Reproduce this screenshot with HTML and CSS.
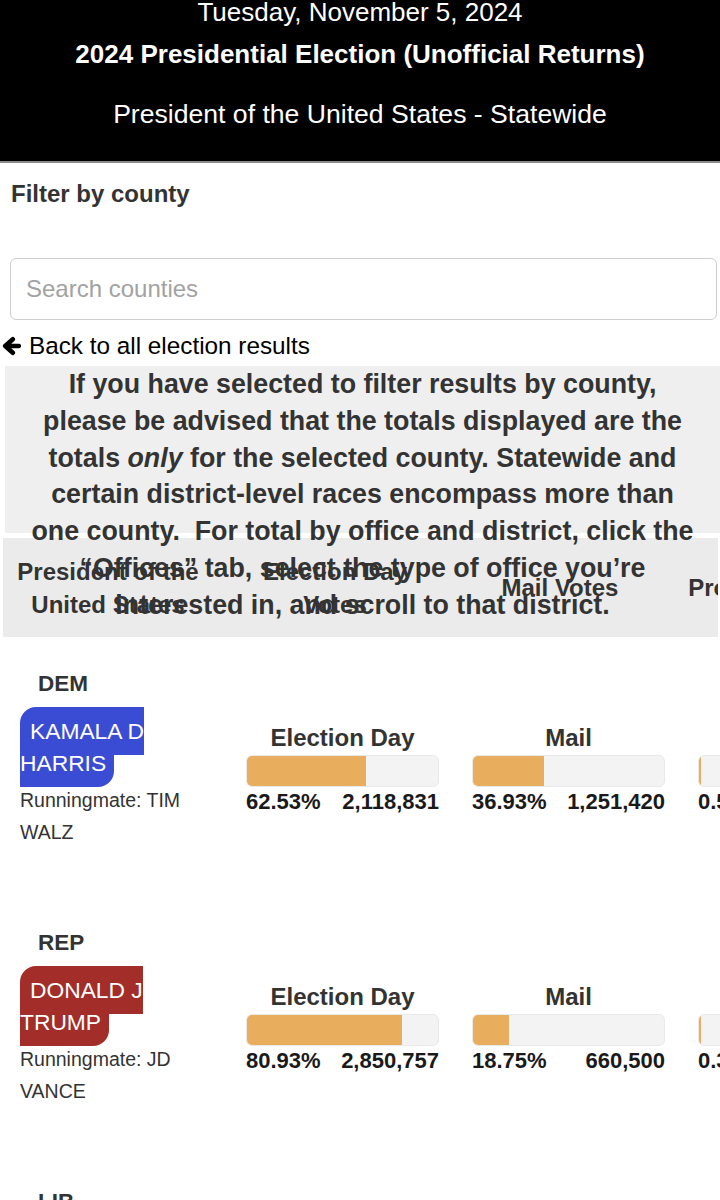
FILE: index.html
```html
<!DOCTYPE html>
<html lang="en">
<head>
<meta charset="utf-8">
<title>2024 Presidential Election (Unofficial Returns)</title>
<link rel="stylesheet" href="styles.css">
</head>
<body>
<header class="masthead">
  <p class="date">Tuesday, November 5, 2024</p>
  <h1 class="election">2024 Presidential Election (Unofficial Returns)</h1>
  <h2 class="race">President of the United States - Statewide</h2>
</header>
<main class="page">
  <h3 class="filter-title">Filter by county</h3>
  <input class="search" type="text" placeholder="Search counties">
  <a class="back" href="#"><svg class="back-icon" viewBox="0 0 19 20" width="19" height="20" aria-hidden="true"><path d="M16.8 10H4.5M10.8 3.2L3.2 10L10.8 16.8" fill="none" stroke="#000" stroke-width="4.6" stroke-linecap="round" stroke-linejoin="round"/></svg>Back to all election results</a>

  <div class="notice">If you have selected to filter results by county, please be advised that the totals displayed are the totals <em>only</em> for the selected county. Statewide and certain district-level races encompass more than one county.&nbsp; For total by office and district, click the “Offices” tab, select the type of office you’re interested in, and scroll to that district.</div>

  <div class="table-head">
    <div class="th th-office">President of the United States</div>
    <div class="th th-eday">Election Day Votes</div>
    <div class="th th-mail">Mail Votes</div>
    <div class="th th-prov">Provisional Votes</div>
  </div>

  <div class="results">
    <div class="cand-row">
      <div class="cand">
        <div class="party">DEM</div>
        <div class="name-wrap"><span class="name dem">KAMALA D HARRIS</span></div>
        <div class="mate">Runningmate: TIM WALZ</div>
      </div>
      <div class="vote">
        <div class="vote-label">Election Day</div>
        <div class="bar"><div class="fill" style="width:62.53%"></div></div>
        <div class="nums"><span>62.53%</span><span>2,118,831</span></div>
      </div>
      <div class="vote">
        <div class="vote-label">Mail</div>
        <div class="bar"><div class="fill" style="width:36.93%"></div></div>
        <div class="nums"><span>36.93%</span><span>1,251,420</span></div>
      </div>
      <div class="vote">
        <div class="vote-label">Provisional</div>
        <div class="bar"><div class="fill" style="width:1.2%"></div></div>
        <div class="nums"><span>0.54%</span><span>18,312</span></div>
      </div>
    </div>

    <div class="cand-row">
      <div class="cand">
        <div class="party">REP</div>
        <div class="name-wrap"><span class="name rep">DONALD J TRUMP</span></div>
        <div class="mate">Runningmate: JD VANCE</div>
      </div>
      <div class="vote">
        <div class="vote-label">Election Day</div>
        <div class="bar"><div class="fill" style="width:80.93%"></div></div>
        <div class="nums"><span>80.93%</span><span>2,850,757</span></div>
      </div>
      <div class="vote">
        <div class="vote-label">Mail</div>
        <div class="bar"><div class="fill" style="width:18.75%"></div></div>
        <div class="nums"><span>18.75%</span><span>660,500</span></div>
      </div>
      <div class="vote">
        <div class="vote-label">Provisional</div>
        <div class="bar"><div class="fill" style="width:1.2%"></div></div>
        <div class="nums"><span>0.32%</span><span>11,204</span></div>
      </div>
    </div>

    <div class="cand-row">
      <div class="cand">
        <div class="party">LIB</div>
        <div class="name-wrap"><span class="name lib">CHASE OLIVER</span></div>
        <div class="mate">Runningmate: MIKE TER MAAT</div>
      </div>
      <div class="vote">
        <div class="vote-label">Election Day</div>
        <div class="bar"><div class="fill" style="width:70.10%"></div></div>
        <div class="nums"><span>70.10%</span><span>23,004</span></div>
      </div>
    </div>
  </div>
</main>
</body>
</html>
```

FILE: styles.css
```css
html, body {
  margin: 0;
  padding: 0;
  overflow: hidden;
  background: #fff;
}

body {
  font-family: "Liberation Sans", Arial, sans-serif;
  color: #333;
}

/* ---------- masthead ---------- */
.masthead {
  background: #000;
  color: #fff;
  text-align: center;
  padding-bottom: 32px;
  border-bottom: 2px solid #8a8a8a;
}

.masthead p,
.masthead h1,
.masthead h2 {
  margin: 0;
  font-size: 26px;
}

.date {
  font-weight: 400;
  line-height: 24px;
}

.election {
  font-weight: 700;
  line-height: 30px;
  margin-top: 15px !important;
}

.race {
  font-weight: 400;
  line-height: 30px;
  margin-top: 30px !important;
  font-size: 26.6px !important;
}

/* ---------- filter ---------- */
.filter-title {
  margin: 17px 0 0 11px;
  font-size: 24px;
  line-height: 28px;
  font-weight: 700;
  color: #333;
}

.search {
  display: block;
  box-sizing: border-box;
  margin: 50px 0 0 10px;
  width: 707px;
  height: 62px;
  border: 1.5px solid #cdcdcd;
  border-radius: 6px;
  padding: 0 15px;
  font-family: "Liberation Sans", Arial, sans-serif;
  font-size: 24px;
  color: #333;
  background: #fff;
  outline: none;
}

.search::placeholder {
  color: #a2a2a2;
}

.back {
  display: flex;
  align-items: center;
  gap: 8px;
  margin: 12px 0 0 2px;
  font-size: 24.3px;
  line-height: 28px;
  color: #000;
  text-decoration: none;
}

.back-icon {
  flex: none;
}

/* ---------- notice ---------- */
.notice {
  box-sizing: border-box;
  margin: 6px 0 0 5px;
  width: 715px;
  height: 167px;
  padding: 0 22px;
  background: #efefef;
  font-family: "Liberation Sans", Arial, sans-serif;
  font-weight: 700;
  font-size: 26.8px;
  line-height: 36.8px;
  text-align: center;
  color: #333;
}

/* ---------- table header ---------- */
.table-head {
  display: flex;
  margin: 5px 0 0 3px;
  width: 715px;
  height: 99px;
  overflow: hidden;
  background: #ebebeb;
}

.th {
  flex: none;
  box-sizing: border-box;
  display: flex;
  align-items: center;
  justify-content: center;
  text-align: center;
  font-size: 24px;
  line-height: 33px;
  font-weight: 700;
  color: #333;
}

.th-office { width: 210px; padding: 0 10px; }
.th-eday   { width: 244px; padding: 0 20px; }
.th-mail   { width: 206px; }
.th-prov   { width: 250px; white-space: nowrap; }

/* ---------- results ---------- */
.results {
  margin-top: 33px;
}

.cand-row {
  display: flex;
  gap: 33px;
  padding: 0 0 81px 20px;
  width: max-content;
}

.cand {
  flex: none;
  width: 180px;
  margin-right: 13px;
}

.party {
  margin-left: 18px;
  font-size: 22.5px;
  line-height: 28px;
  font-weight: 700;
  color: #333;
}

.name-wrap {
  margin-top: 17px;
  font-size: 22.8px;
  line-height: 32px;
}

.name {
  color: #fff;
  padding: 11.3px 8px 11.3px 10px;
  border-radius: 16px;
}

.name.dem { background: #3b4cd4; }
.name.rep { background: #a32d28; }
.name.lib { background: #d9a400; }

.mate {
  margin-top: 5px;
  font-size: 19.5px;
  line-height: 32px;
  color: #333;
}

.vote {
  flex: none;
  width: 193px;
  padding-top: 54px;
}

.vote-label {
  text-align: center;
  font-size: 24px;
  line-height: 28px;
  font-weight: 700;
  color: #333;
}

.bar {
  box-sizing: border-box;
  margin-top: 3px;
  height: 32px;
  border: 1px solid #e9e9e9;
  border-radius: 6px;
  background: #f3f3f3;
  overflow: hidden;
}

.fill {
  height: 100%;
  background: #e8ae5d;
}

.nums {
  display: flex;
  justify-content: space-between;
  margin-top: 1px;
  font-size: 22px;
  line-height: 28px;
  font-weight: 700;
  color: #1a1a1a;
}
```
